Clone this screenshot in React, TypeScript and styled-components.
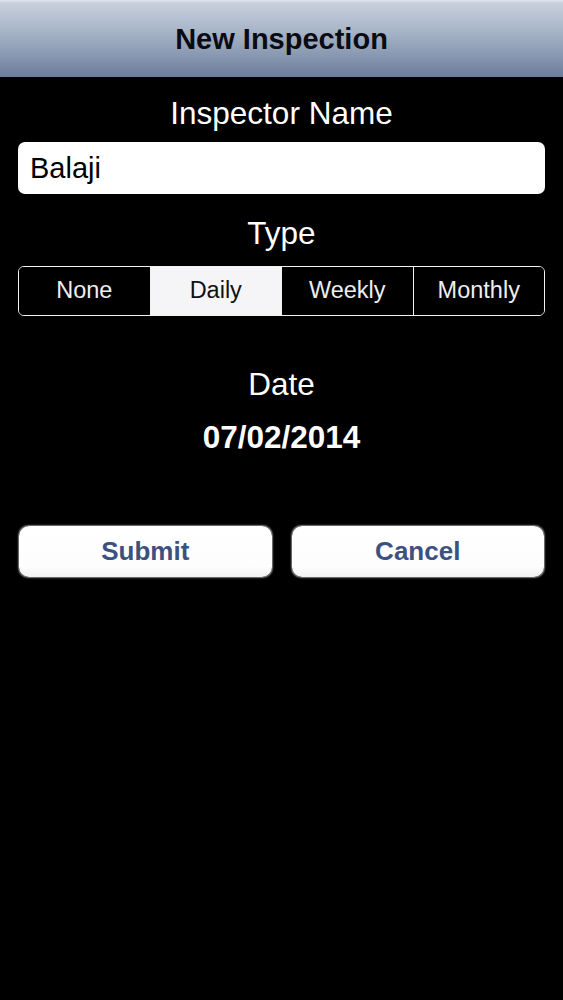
import React from "react";
import styled, { createGlobalStyle } from "styled-components";

const Global = createGlobalStyle`
  html, body { margin: 0; padding: 0; background: #000; }
  body { font-family: "Liberation Sans", Arial, Helvetica, sans-serif; }
`;

const Screen = styled.div`
  width: 563px;
  min-height: 1000px;
  background: #000;
  display: flex;
  flex-direction: column;
`;

const NavBar = styled.header`
  height: 77px;
  display: flex;
  align-items: center;
  justify-content: center;
  background: linear-gradient(to bottom, #e2e7ee 0px, #c7d0dd 3px, #a9b6c8 30px, #8393ad 60px, #6a7c9b 77px);
`;

const NavTitle = styled.h1`
  margin: 0;
  font-size: 29px;
  font-weight: 700;
  color: #0a0c12;
  line-height: 36px;
`;

const Content = styled.main`
  display: flex;
  flex-direction: column;
  padding: 0 18px;
`;

const Label = styled.div<{ $top: number }>`
  margin-top: ${(p) => p.$top}px;
  text-align: center;
  color: #fff;
  font-size: 31.5px;
  line-height: 36px;
`;

const DateValue = styled.div`
  margin-top: 17px;
  text-align: center;
  color: #fff;
  font-size: 31.5px;
  font-weight: 700;
  line-height: 36px;
`;

const TextField = styled.div`
  margin-top: 11px;
  height: 52px;
  box-sizing: border-box;
  background: #fff;
  border-radius: 7px;
  display: flex;
  align-items: center;
  padding-left: 12px;
  font-size: 29px;
  color: #000;
`;

const Segmented = styled.div`
  margin-top: 15px;
  height: 50px;
  box-sizing: border-box;
  border: 1.5px solid #f2f2f2;
  border-radius: 6px;
  display: flex;
  overflow: hidden;
`;

const Segment = styled.div<{ $active?: boolean }>`
  flex: 1;
  display: flex;
  align-items: center;
  justify-content: center;
  font-size: 23.5px;
  padding-bottom: 1px;
  background: ${(p) => (p.$active ? "#f5f5f7" : "#000")};
  color: ${(p) => (p.$active ? "#111" : "#eee")};
  & + & {
    border-left: 1.5px solid #f2f2f2;
  }
`;

const ButtonRow = styled.div`
  margin-top: 71px;
  display: grid;
  grid-template-columns: 1fr 1fr;
  gap: 20px;
  padding: 0 1px;
`;

const Button = styled.div`
  height: 51px;
  border-radius: 10px;
  background: linear-gradient(to bottom, #ffffff 0%, #fdfdfd 80%, #f1f1f1 100%);
  box-shadow: 0 0 1.5px 0.5px rgba(255, 255, 255, 0.5);
  display: flex;
  align-items: center;
  justify-content: center;
  font-size: 26px;
  font-weight: 700;
  color: #3c5180;
`;

export default function App() {
  return (
    <>
      <Global />
      <Screen>
        <NavBar>
          <NavTitle>New Inspection</NavTitle>
        </NavBar>
        <Content>
          <Label $top={18}>Inspector Name</Label>
          <TextField>Balaji</TextField>
          <Label $top={21}>Type</Label>
          <Segmented>
            <Segment>None</Segment>
            <Segment $active>Daily</Segment>
            <Segment>Weekly</Segment>
            <Segment>Monthly</Segment>
          </Segmented>
          <Label $top={50}>Date</Label>
          <DateValue>07/02/2014</DateValue>
          <ButtonRow>
            <Button>Submit</Button>
            <Button>Cancel</Button>
          </ButtonRow>
        </Content>
      </Screen>
    </>
  );
}
